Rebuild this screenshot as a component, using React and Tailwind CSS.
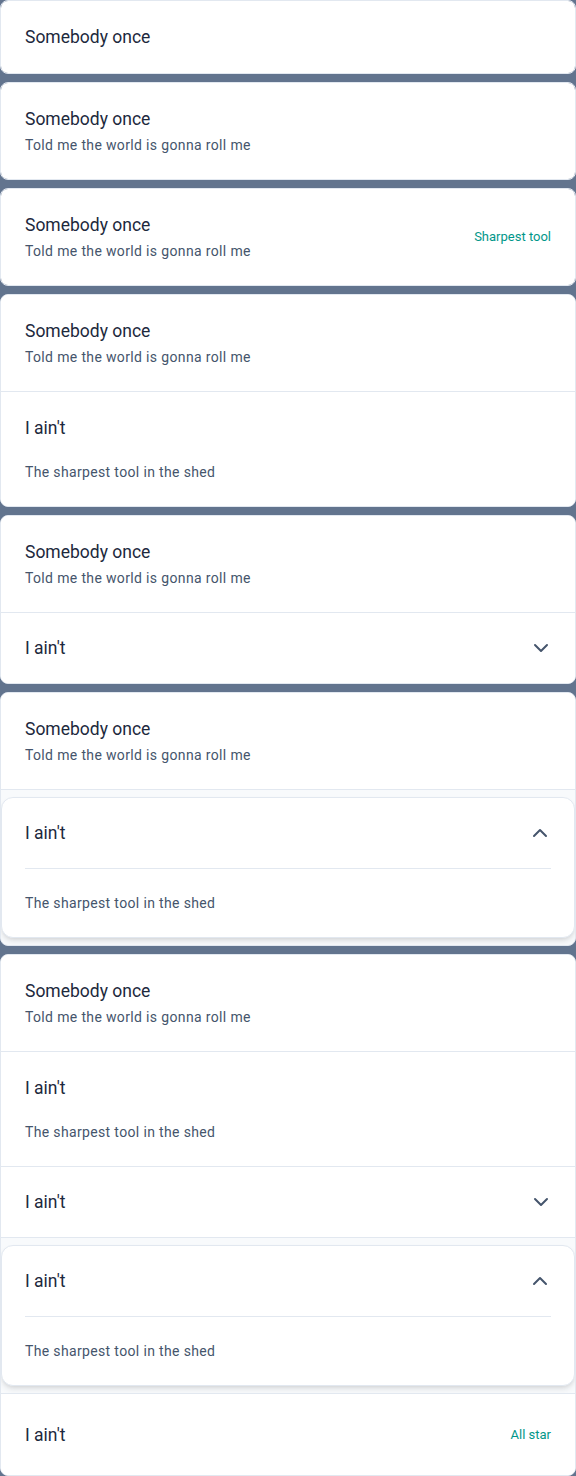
import React from "react";
import { ChevronDown, ChevronUp } from "lucide-react";

const Title = ({ children }) => (
  <div className="text-[17.5px] leading-6 text-slate-800">{children}</div>
);
const Sub = ({ children, className = "" }) => (
  <div className={"text-[14px] leading-5 tracking-[0.35px] text-slate-600 " + className}>{children}</div>
);

const TwoLine = ({ className = "", trailing }) => (
  <div className={"flex items-center bg-white px-6 py-6 " + className}>
    <div className="flex-1">
      <Title>Somebody once</Title>
      <Sub className="mt-1">Told me the world is gonna roll me</Sub>
    </div>
    {trailing}
  </div>
);

const Described = ({ className = "" }) => (
  <div className={"bg-white px-6 pt-6 pb-6 " + className}>
    <Title>I ain't</Title>
    <Sub className="mt-[22px]">The sharpest tool in the shed</Sub>
  </div>
);

const Collapsed = ({ className = "" }) => (
  <div className={"flex items-center justify-between bg-white px-6 py-[23px] " + className}>
    <Title>I ain't</Title>
    <ChevronDown size={24} strokeWidth={2} className="-mr-0.5 text-slate-600" />
  </div>
);

const Raised = ({ className = "" }) => (
  <div className={"rounded-xl border border-slate-200 bg-white shadow-md " + className}>
    <div className="flex items-center justify-between px-[23px] py-[23px]">
      <Title>I ain't</Title>
      <ChevronUp size={24} strokeWidth={2} className="-mr-px text-slate-600" />
    </div>
    <div className="mx-[23px] border-t border-slate-200" />
    <div className="px-[23px] py-6">
      <Sub>The sharpest tool in the shed</Sub>
    </div>
  </div>
);

export default function App() {
  return (
    <div className="flex min-h-screen flex-col gap-2 bg-slate-500 font-['Roboto',sans-serif]">
      <div className="overflow-hidden rounded-lg border border-slate-200 bg-white">
        <div className="bg-white px-6 py-6">
          <Title>Somebody once</Title>
        </div>
      </div>

      <div className="overflow-hidden rounded-lg border border-slate-200 bg-white">
        <TwoLine />
      </div>

      <div className="overflow-hidden rounded-lg border border-slate-200 bg-white">
        <TwoLine
          trailing={
            <span className="text-[13px] leading-5 text-teal-600">Sharpest tool</span>
          }
        />
      </div>

      <div className="overflow-hidden rounded-lg border border-slate-200 bg-white">
        <TwoLine />
        <Described className="border-t border-slate-200" />
      </div>

      <div className="overflow-hidden rounded-lg border border-slate-200 bg-white">
        <TwoLine />
        <Collapsed className="border-t border-slate-200" />
      </div>

      <div className="overflow-hidden rounded-lg border border-slate-200 bg-slate-50">
        <TwoLine className="border-b border-slate-200" />
        <Raised className="my-[7px]" />
      </div>

      <div className="overflow-hidden rounded-lg border border-slate-200 bg-slate-50">
        <TwoLine />
        <Described className="border-t border-slate-200" />
        <Collapsed className="border-y border-slate-200" />
        <Raised className="my-[7px]" />
        <div className="flex items-center justify-between border-t border-slate-200 bg-white px-6 pt-[29px] pb-7">
          <Title>I ain't</Title>
          <span className="text-[13px] leading-5 text-teal-600">All star</span>
        </div>
      </div>
    </div>
  );
}
